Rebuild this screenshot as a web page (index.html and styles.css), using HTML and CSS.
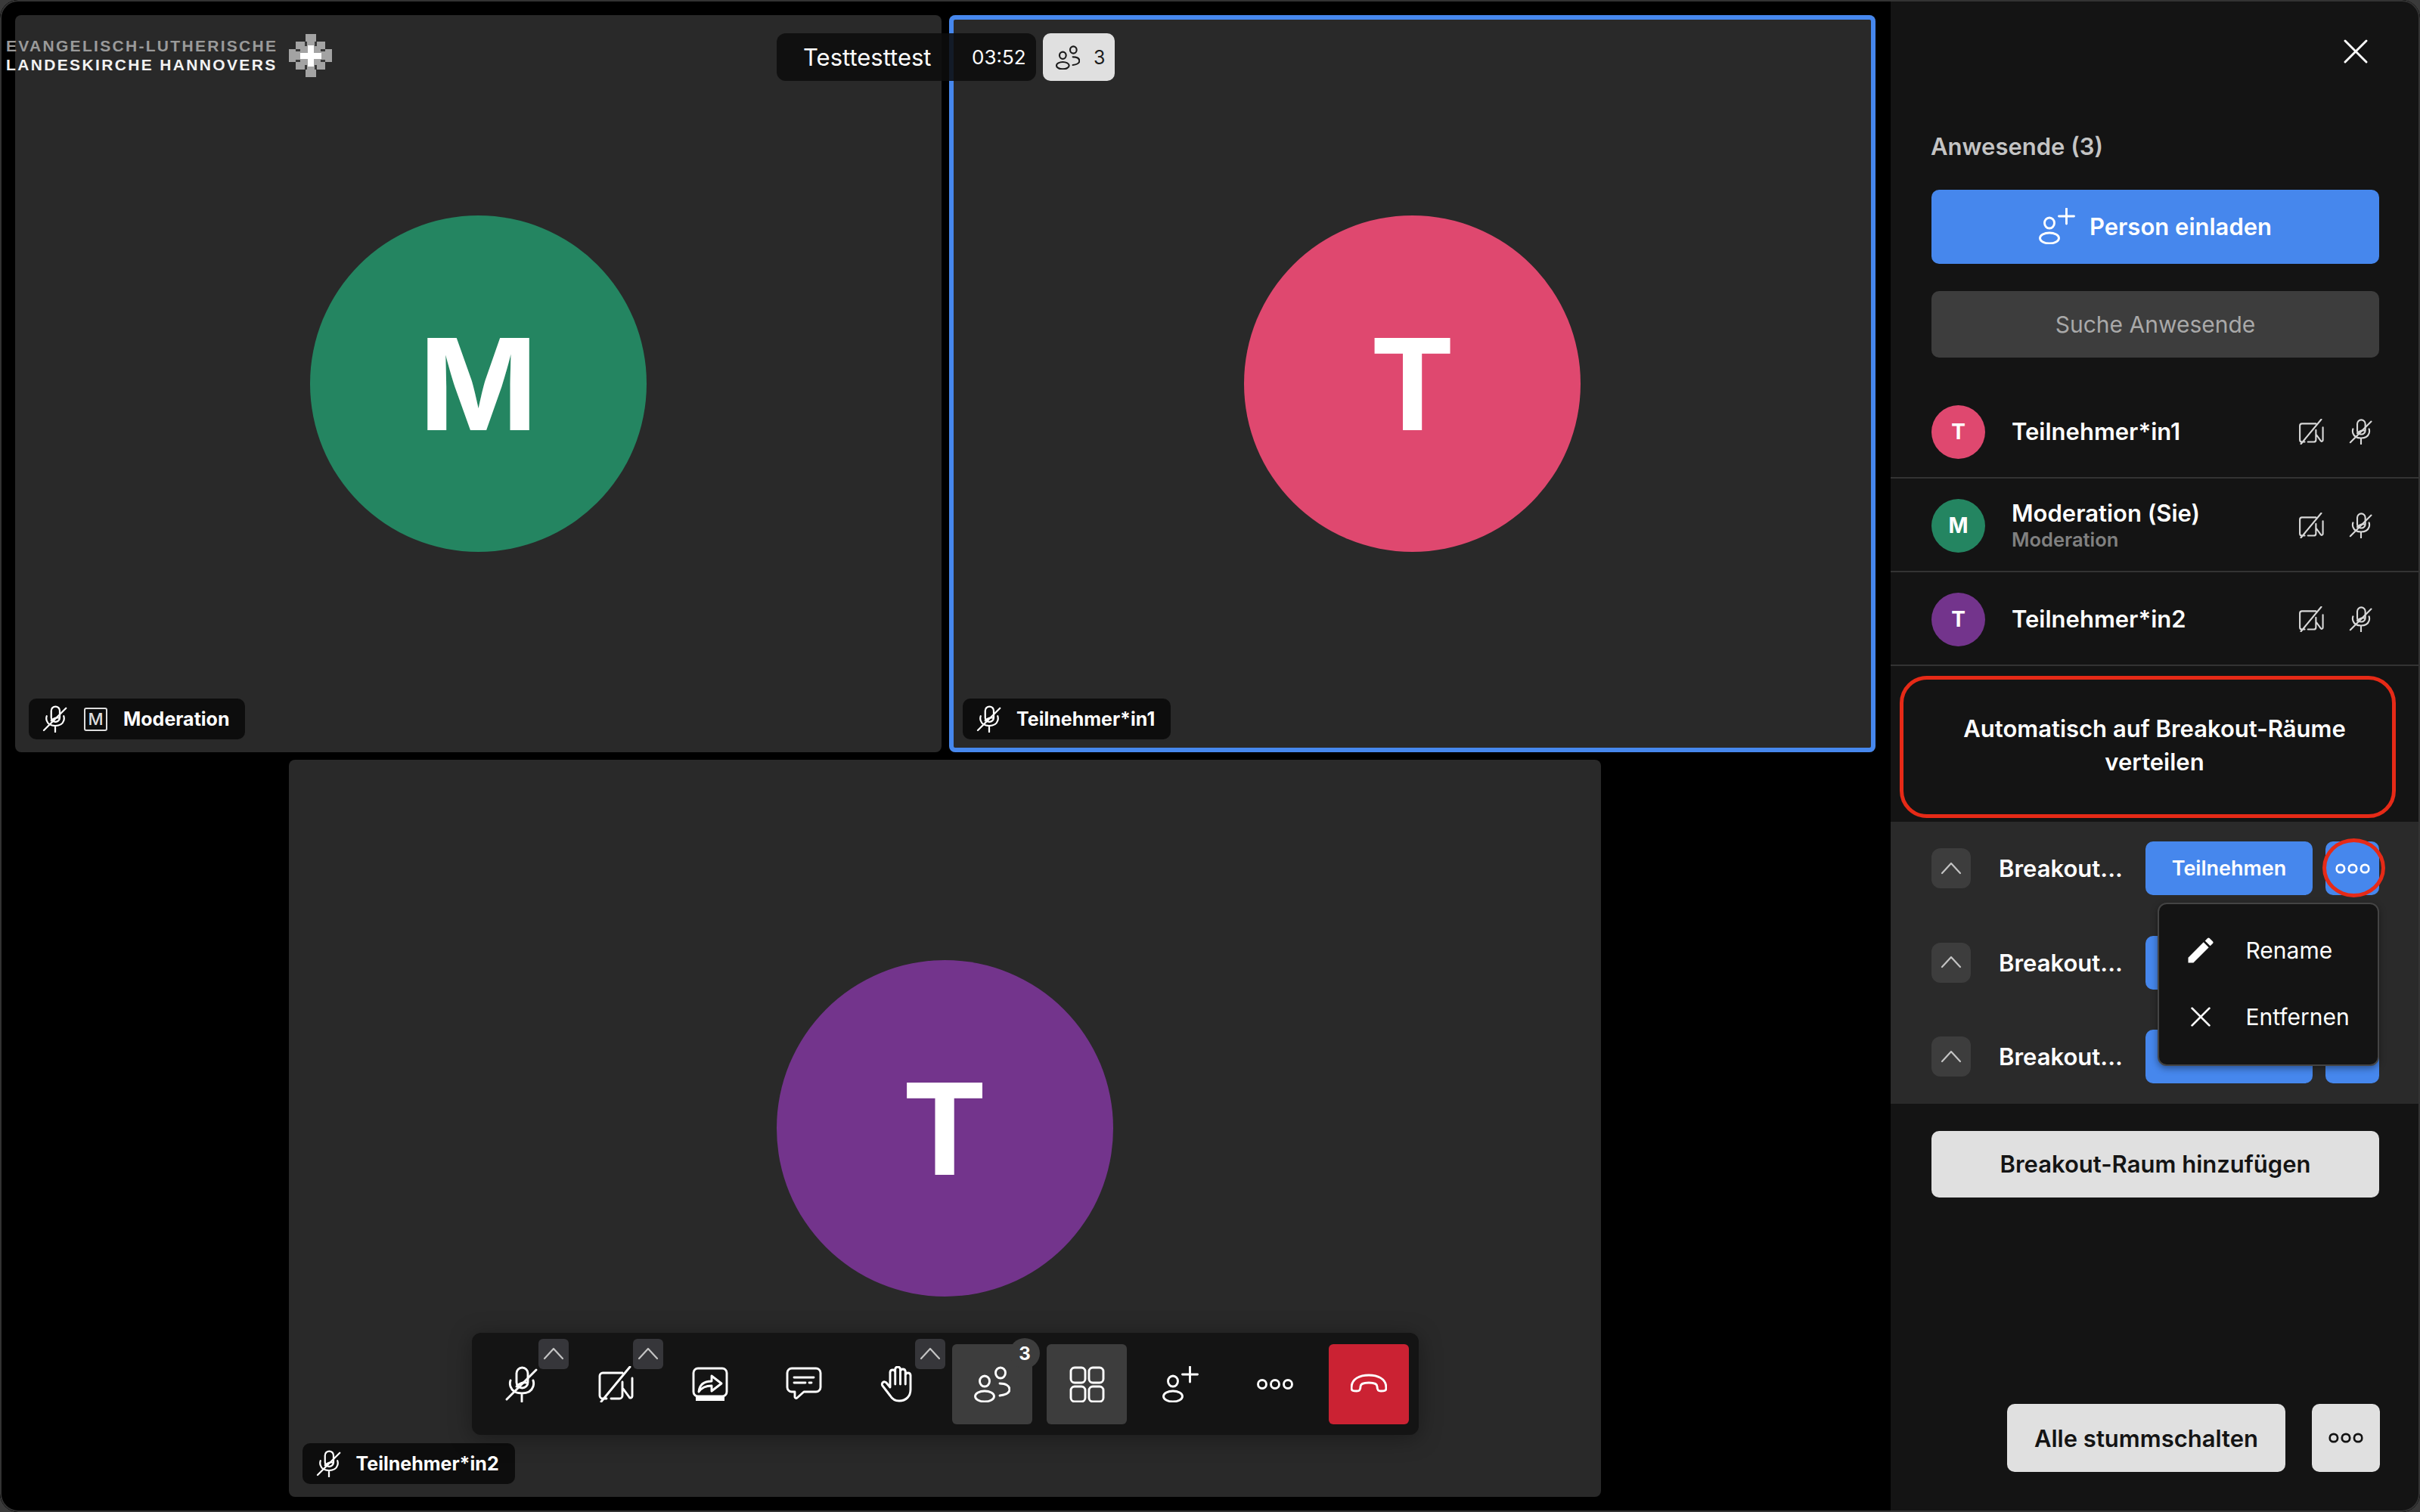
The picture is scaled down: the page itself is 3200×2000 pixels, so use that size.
FILE: index.html
```html
<!DOCTYPE html>
<html lang="de">
<head>
<meta charset="utf-8">
<title>Testtesttest</title>
<link rel="stylesheet" href="styles.css">
</head>
<body>
<svg class="sprite" aria-hidden="true">
  <symbol id="mic" viewBox="0 0 48 48"><rect x="17" y="2" width="15" height="27" rx="7.5"/><path d="M9 19c-1 3-1 5 0 8 2 6 8 9 15 9s13-3 15-9c1-3 1-5 0-8M24 36v11M4 44 43 5"/><path d="M17 27c3-4 9-6 13-5"/></symbol>
  <symbol id="cam" viewBox="0 0 48 48"><path d="M12 43H7a4 4 0 0 1-4-4V13a4 4 0 0 1 4-4h26M18 43h11a4 4 0 0 0 4-4V21M34 30l8 11c1 2 4 1 4-1V16M5 47 43 1"/></symbol>
  <symbol id="share" viewBox="0 0 48 48"><rect x="2" y="3" width="44" height="37" rx="6"/><rect class="solid" x="5" y="41" width="38" height="5"/><path d="M9 34c1-10 8-14 17-14v-7l13 10-13 10v-7c-7 0-13 2-17 8Z"/></symbol>
  <symbol id="chat" viewBox="0 0 48 48"><path d="M8 3h32a6 6 0 0 1 6 6v19a6 6 0 0 1-6 6H24l-9 8a1.8 1.8 0 0 1-3-1V34H8a6 6 0 0 1-6-6V9a6 6 0 0 1 6-6Z"/><path d="M11 15h26M11 22h15M31 22h3"/></symbol>
  <symbol id="hand" viewBox="0 0 48 48"><path d="M13 28 8 22a3.2 3.2 0 0 0-5 4l10 13c3 5 7 7 12 7 9 0 15-6 15-15V12a3.4 3.4 0 0 0-6.75 0v12V7a3.4 3.4 0 0 0-6.75 0v17V4a3.4 3.4 0 0 0-6.75 0v20V8A3.4 3.4 0 0 0 13 8Z"/></symbol>
  <symbol id="people" viewBox="0 0 48 48"><ellipse cx="14" cy="20" rx="6.5" ry="7"/><ellipse cx="14" cy="40" rx="12.5" ry="7"/><ellipse cx="35" cy="9" rx="6.5" ry="7"/><path d="M34 23c8 0 13 3 13 8s-5 7-13 8"/></symbol>
  <symbol id="grid" viewBox="0 0 48 48"><rect x="3" y="2" width="19" height="20" rx="5"/><rect x="27" y="2" width="19" height="20" rx="5"/><rect x="3" y="27" width="19" height="20" rx="5"/><rect x="27" y="27" width="19" height="20" rx="5"/></symbol>
  <symbol id="invite" viewBox="0 0 48 48"><ellipse cx="14" cy="20" rx="6.5" ry="7"/><ellipse cx="14" cy="40" rx="12.5" ry="7"/><path d="M36.500 1v20M26.500 11h20"/></symbol>
  <symbol id="dots" viewBox="0 0 48 48"><circle cx="7" cy="24" r="5.500"/><circle cx="24" cy="24" r="5.500"/><circle cx="41" cy="24" r="5.500"/></symbol>
  <symbol id="hangup" viewBox="0 0 48 48"><path d="M1 29C1 16 13 12 24 12s23 4 23 17c0 4-3 4-7 4s-5-2-5-6c0-3-4-5-11-5s-11 2-11 5c0 4-1 6-5 6s-7 0-7-4Z"/></symbol>
  <symbol id="chev" viewBox="0 0 40 40"><path d="M8 26 20 13l12 13"/></symbol>
  <symbol id="close" viewBox="0 0 32 32"><path d="M2 2 30 30M30 2 2 30"/></symbol>
  <symbol id="pencil" viewBox="0 0 24 24"><path class="solid" d="M3 17.250V21h3.750L17.810 9.940l-3.750-3.750L3 17.250zM20.710 7.040a1 1 0 0 0 0-1.410l-2.340-2.340a1 1 0 0 0-1.410 0l-1.830 1.830 3.750 3.750 1.830-1.830z"/></symbol>
  <symbol id="cross" viewBox="0 0 57 57"><path class="crossgrey" d="M22 0h14v10h12v10h9v17h-9v10H36v10H22V47H9V37H0V20h9V10h13Z"/><path class="crossnotch" d="M21 10h3v6h-3ZM34 10h3v6h-3ZM9 20h6v3H9ZM42 20h6v3h-6ZM9 34h6v3H9ZM42 34h6v3h-6ZM21 41h3v6h-3ZM34 41h3v6h-3Z"/><path class="crosswhite" d="M25 15h8v10h10v8H33v10h-8V33H15v-8h10Z"/></symbol>
</svg>

<div class="app">
  <main class="stage">
    <div class="logo">
      <div class="logo-text">
        <div class="logo-top">EVANGELISCH-LUTHERISCHE</div>
        <div class="logo-bottom">LANDESKIRCHE HANNOVERS</div>
      </div>
      <svg class="logo-cross"><use href="#cross"/></svg>
    </div>

    <div class="topbar">
      <div class="meeting">
        <span class="meeting-name">Testtesttest</span>
        <span class="meeting-time">03:52</span>
      </div>
      <div class="count-chip">
        <svg class="ic ic-32"><use href="#people"/></svg>
        <span>3</span>
      </div>
    </div>

    <section class="tile">
      <div class="avatar-big green">M</div>
      <div class="label">
        <svg class="ic ic-36"><use href="#mic"/></svg>
        <span class="mod-box">M</span>
        <span class="label-name">Moderation</span>
      </div>
    </section>
    <section class="tile active">
      <div class="avatar-big pink">T</div>
      <div class="label">
        <svg class="ic ic-36"><use href="#mic"/></svg>
        <span class="label-name">Teilnehmer*in1</span>
      </div>
    </section>
    <section class="tile wide">
      <div class="avatar-big purple">T</div>
      <div class="label">
        <svg class="ic ic-36"><use href="#mic"/></svg>
        <span class="label-name">Teilnehmer*in2</span>
      </div>
    </section>

    <nav class="toolbar">
      <div class="tool"><svg class="ic ic-48"><use href="#mic"/></svg><span class="tool-chev"><svg class="ic ic-chev"><use href="#chev"/></svg></span></div>
      <div class="tool"><svg class="ic ic-48"><use href="#cam"/></svg><span class="tool-chev"><svg class="ic ic-chev"><use href="#chev"/></svg></span></div>
      <div class="tool"><svg class="ic ic-48"><use href="#share"/></svg></div>
      <div class="tool"><svg class="ic ic-48"><use href="#chat"/></svg></div>
      <div class="tool"><svg class="ic ic-48"><use href="#hand"/></svg><span class="tool-chev"><svg class="ic ic-chev"><use href="#chev"/></svg></span></div>
      <div class="tool on"><svg class="ic ic-48"><use href="#people"/></svg><span class="tool-badge">3</span></div>
      <div class="tool on"><svg class="ic ic-48"><use href="#grid"/></svg></div>
      <div class="tool"><svg class="ic ic-48"><use href="#invite"/></svg></div>
      <div class="tool"><svg class="ic ic-48"><use href="#dots"/></svg></div>
      <div class="tool hang"><svg class="ic ic-48"><use href="#hangup"/></svg></div>
    </nav>
  </main>

  <aside class="panel">
    <div class="panel-head"><svg class="ic ic-close"><use href="#close"/></svg></div>
    <h2 class="panel-title">Anwesende (3)</h2>
    <div class="btn btn-blue invite">
      <svg class="ic ic-invite"><use href="#invite"/></svg>
      <span>Person einladen</span>
    </div>
    <div class="search">Suche Anwesende</div>

    <ul class="people">
      <li class="person">
        <div class="avatar pink">T</div>
        <div class="person-text"><div class="person-name">Teilnehmer*in1</div></div>
        <svg class="ic ic-34"><use href="#cam"/></svg>
        <svg class="ic ic-34"><use href="#mic"/></svg>
      </li>
      <li class="person">
        <div class="avatar green">M</div>
        <div class="person-text"><div class="person-name">Moderation (Sie)</div><div class="person-role">Moderation</div></div>
        <svg class="ic ic-34"><use href="#cam"/></svg>
        <svg class="ic ic-34"><use href="#mic"/></svg>
      </li>
      <li class="person">
        <div class="avatar purple">T</div>
        <div class="person-text"><div class="person-name">Teilnehmer*in2</div></div>
        <svg class="ic ic-34"><use href="#cam"/></svg>
        <svg class="ic ic-34"><use href="#mic"/></svg>
      </li>
    </ul>

    <div class="auto">Automatisch auf Breakout-Räume<br>verteilen</div>

    <div class="rooms">
      <div class="room">
        <span class="room-chev"><svg class="ic ic-chev"><use href="#chev"/></svg></span>
        <span class="room-name">Breakout...</span>
        <span class="btn btn-blue join">Teilnehmen</span>
        <span class="btn btn-blue more"><svg class="ic ic-dots"><use href="#dots"/></svg><span class="ring"></span></span>
      </div>
      <div class="room">
        <span class="room-chev"><svg class="ic ic-chev"><use href="#chev"/></svg></span>
        <span class="room-name">Breakout...</span>
        <span class="btn btn-blue join"></span>
        <span class="btn btn-blue more"></span>
      </div>
      <div class="room">
        <span class="room-chev"><svg class="ic ic-chev"><use href="#chev"/></svg></span>
        <span class="room-name">Breakout...</span>
        <span class="btn btn-blue join"></span>
        <span class="btn btn-blue more"></span>
      </div>
      <div class="menu">
        <div class="menu-item"><svg class="menu-icon"><use href="#pencil"/></svg><span>Rename</span></div>
        <div class="menu-item"><span class="menu-x"><svg class="ic ic-x"><use href="#close"/></svg></span><span>Entfernen</span></div>
      </div>
    </div>

    <div class="btn btn-light add-room">Breakout-Raum hinzufügen</div>

    <div class="panel-foot">
      <div class="btn btn-light mute-all">Alle stummschalten</div>
      <div class="btn btn-light foot-more"><svg class="ic ic-dots"><use href="#dots"/></svg></div>
    </div>
  </aside>
</div>
</body>
</html>
```
FILE: styles.css
```css
* { box-sizing: border-box; }
html, body { margin: 0; padding: 0; background: #3a3a3a; }
body { font-family: Inter, "Liberation Sans", sans-serif; color: #fff; }
.sprite { position: absolute; width: 0; height: 0; overflow: hidden; }
.ic { fill: none; stroke: currentColor; stroke-width: 2.9; stroke-linecap: round; stroke-linejoin: round; display: block; flex: none; }
.solid { fill: currentColor; stroke: none; }
.crossgrey { fill: #a3a3a3; stroke: none; }
.crossnotch { fill: #3a3a3a; stroke: none; }
.crosswhite { fill: #fff; stroke: none; }
.ic-32 { width: 32px; height: 32px; stroke-width: 3.2; }
.ic-34 { width: 34px; height: 34px; stroke-width: 3; }
.ic-36 { width: 36px; height: 36px; stroke-width: 3; }
.ic-48 { width: 48px; height: 48px; }

.app { position: relative; width: 3200px; height: 2000px; display: flex; border-radius: 24px; overflow: hidden; background: #000; }
.app::after { content: ""; position: absolute; inset: 0; border: 2px solid #333; border-radius: 24px; pointer-events: none; }

.stage { position: relative; width: 2500px; height: 2000px; padding: 20px; display: flex; flex-wrap: wrap; justify-content: center; align-content: flex-start; gap: 10px; background: #000; }

.tile { position: relative; width: 1225px; height: 975px; background: #292929; border-radius: 8px; display: flex; align-items: center; justify-content: center; }
.tile.wide { width: 1735px; margin-right: 2px; }
.tile.active { box-shadow: inset 0 0 0 6px #4687ed; }

.avatar-big { width: 445px; height: 445px; border-radius: 50%; display: flex; align-items: center; justify-content: center; font-size: 168px; font-weight: 700; color: #fff; }
.green { background: #248561; }
.pink { background: #df486f; }
.purple { background: #73348c; }

.label { position: absolute; left: 18px; bottom: 17px; height: 54px; display: flex; align-items: center; gap: 18px; padding: 0 21px 0 17px; background: #0d0d0d; border-radius: 10px; }
.mod-box { width: 31px; height: 31px; border: 2px solid #ddd; border-radius: 3px; display: flex; align-items: center; justify-content: center; font-size: 22px; font-weight: 500; color: #ddd; margin: 0 3px 0 2px; }
.label-name { font-size: 25px; font-weight: 700; }

.logo { position: absolute; left: 8px; top: 45px; display: flex; align-items: center; gap: 15px; z-index: 2; }
.logo-text { font-family: "Liberation Sans", sans-serif; font-weight: 700; font-size: 21px; line-height: 24.200px; white-space: nowrap; }
.logo-top { color: #9a9a9a; letter-spacing: 2.300px; }
.logo-bottom { color: #f2f2f2; letter-spacing: 2.350px; }
.logo-cross { width: 57px; height: 57px; flex: none; }

.topbar { position: absolute; left: 1027px; top: 44px; height: 63px; display: flex; gap: 9px; z-index: 2; }
.meeting { width: 343px; display: flex; align-items: center; background: rgba(12, 12, 12, .88); border-radius: 12px; padding-left: 35px; font-size: 31px; }
.meeting-name { width: 223px; font-weight: 400; }
.meeting-time { font-size: 26px; }
.count-chip { width: 95px; display: flex; align-items: center; gap: 18px; padding-left: 17px; background: #e0e0e0; border-radius: 10px; color: #1c1c1c; font-size: 25px; }

.toolbar { position: absolute; left: 624px; top: 1763px; width: 1252px; height: 135px; padding: 15px 12.500px; display: flex; gap: 18.500px; background: #141414; border-radius: 12px; box-shadow: 0 4px 30px rgba(0, 0, 0, .35); z-index: 3; }
.tool { position: relative; width: 106px; height: 106px; flex: none; display: flex; align-items: center; justify-content: center; border-radius: 6px; }
.tool.on { background: #3d3d3d; }
.tool.hang { background: #cb2233; }
.tool-chev { position: absolute; left: 75.500px; top: -7px; width: 40px; height: 40px; background: #36363a; border-radius: 6px; color: #c4c4c4; }
.ic-chev { width: 40px; height: 40px; stroke-width: 2.2; }
.tool-badge { position: absolute; right: -10px; top: -8px; width: 40px; height: 40px; border-radius: 50%; background: #3d3d3d; display: flex; align-items: center; justify-content: center; font-size: 24px; font-weight: 700; }

.panel { width: 700px; height: 2000px; background: #141414; display: flex; flex-direction: column; padding-bottom: 53px; }
.panel-head { height: 160px; padding: 52px 69px 0 0; display: flex; justify-content: flex-end; }
.ic-close { width: 32px; height: 32px; }
.panel-title { margin: 16px 54px 0 53px; height: 36px; line-height: 36px; font-size: 31px; font-weight: 600; color: #c4c4c4; }
.btn { display: flex; align-items: center; justify-content: center; border-radius: 10px; font-weight: 600; flex: none; }
.btn-blue { background: #4687ed; color: #fff; }
.btn-light { background: #e0e0e0; color: #141414; }
.invite { margin: 39px 54px 0; height: 98px; gap: 19px; font-size: 31px; padding-bottom: 2px; }
.ic-invite { width: 48px; height: 48px; }
.search { margin: 36px 54px 0; height: 88px; border-radius: 10px; background: #3d3d3d; color: #a9a9a9; font-size: 30px; display: flex; align-items: center; justify-content: center; }

.people { list-style: none; margin: 36px 0 0; padding: 0; }
.person { height: 124px; padding: 2px 61px 0 54px; display: flex; align-items: center; gap: 32px; border-bottom: 2px solid #333; color: #d8d8d8; }
.avatar { width: 71px; height: 71px; border-radius: 50%; display: flex; align-items: center; justify-content: center; font-size: 28px; font-weight: 700; color: #fff; flex: none; margin-right: 3px; }
.person-text { flex: 1; min-width: 0; }
.person-name { font-size: 31px; font-weight: 600; color: #fff; line-height: 38px; }
.person-role { font-size: 25.500px; font-weight: 600; color: #808080; line-height: 32px; }

.auto { margin: 13px 32px 0 12px; height: 188px; padding: 0 0 5px 18px; border: 5px solid #e62a17; border-radius: 36px; display: flex; align-items: center; justify-content: center; text-align: center; font-size: 31px; font-weight: 600; line-height: 44px; }

.rooms { position: relative; margin-top: 5px; height: 373px; padding-top: 26px; background: #2a2a2a; display: flex; flex-direction: column; gap: 53.500px; }
.room { height: 71px; padding: 0 54px; display: flex; align-items: center; }
.room-chev { width: 52px; height: 53px; border-radius: 12px; background: #3d3d3d; color: #c4c4c4; display: flex; align-items: center; justify-content: center; flex: none; }
.room-name { width: 231px; padding-left: 37px; font-size: 31px; font-weight: 600; white-space: nowrap; }
.join { width: 221px; height: 71px; font-size: 27px; margin-right: 17px; }
.more { position: relative; width: 71px; height: 71px; }
.ic-dots { width: 48px; height: 48px; transform: scale(.95); }
.ring { position: absolute; left: -4px; top: -4px; width: 83px; height: 78px; border: 5px solid #e62a17; border-radius: 50% / 50%; }

.menu { position: absolute; left: 352.500px; top: 107px; width: 293px; height: 216px; background: #141414; border: 2px solid #444; border-radius: 12px; box-shadow: 0 3px 10px rgba(0, 0, 0, .4); display: flex; flex-direction: column; padding-top: 17px; }
.menu-item { height: 88px; display: flex; align-items: center; gap: 41px; padding-left: 36px; font-size: 30px; font-weight: 400; }
.menu-icon { width: 44px; height: 44px; flex: none; margin-left: -3px; margin-right: -3px; }
.menu-x { width: 44px; height: 44px; display: flex; align-items: center; justify-content: center; margin-left: -3px; margin-right: -3px; }
.ic-x { width: 26px; height: 26px; stroke-width: 3.400; }

.add-room { margin: 36px 54px 0; height: 88px; font-size: 31px; padding-bottom: 2px; }
.panel-foot { margin-top: auto; padding: 0 53px 0 154px; display: flex; gap: 35px; }
.mute-all { width: 368px; height: 90px; font-size: 31px; }
.foot-more { width: 90px; height: 90px; }
```
